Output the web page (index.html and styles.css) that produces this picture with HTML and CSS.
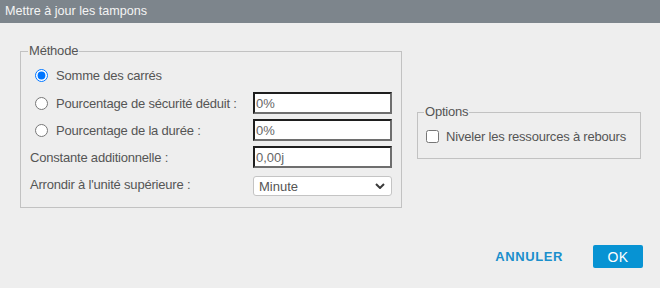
FILE: index.html
```html
<!DOCTYPE html>
<html lang="fr">
<head>
<meta charset="utf-8">
<title>Mettre à jour les tampons</title>
<link rel="stylesheet" href="styles.css">
</head>
<body>
<div class="dialog">
  <header class="titlebar">Mettre à jour les tampons</header>
  <main class="content">
    <fieldset class="group methode">
      <legend>Méthode</legend>
      <div class="grid">
        <label class="radio-row"><input type="radio" name="m" checked><span>Somme des carrés</span></label>
        <span></span>
        <label class="radio-row"><input type="radio" name="m"><span>Pourcentage de sécurité déduit :</span></label>
        <input class="field" type="text" value="0%">
        <label class="radio-row"><input type="radio" name="m"><span>Pourcentage de la durée :</span></label>
        <input class="field" type="text" value="0%">
        <span class="label">Constante additionnelle :</span>
        <input class="field" type="text" value="0,00j">
        <span class="label">Arrondir à l'unité supérieure :</span>
        <div class="select-wrap">
          <select class="select"><option>Minute</option></select>
          <svg class="chevron" width="10" height="6" viewBox="0 0 10 6"><path d="M1 1 L5 5 L9 1" fill="none" stroke="#3a3a3a" stroke-width="2"/></svg>
        </div>
      </div>
    </fieldset>
    <fieldset class="group options">
      <legend>Options</legend>
      <label class="check-row"><input type="checkbox"><span>Niveler les ressources à rebours</span></label>
    </fieldset>
  </main>
  <footer class="actions">
    <button class="btn-text" type="button">ANNULER</button>
    <button class="btn-primary" type="button">OK</button>
  </footer>
</div>
</body>
</html>
```

FILE: styles.css
```css
* { box-sizing: border-box; }
html, body { margin: 0; padding: 0; }
body {
  width: 660px;
  height: 288px;
  background: #eeeeee;
  font-family: "Liberation Sans", Arial, sans-serif;
  font-size: 13px;
  letter-spacing: -0.2px;
  color: #555555;
  overflow: hidden;
}
.dialog {
  display: flex;
  flex-direction: column;
  height: 288px;
}
.titlebar {
  height: 23px;
  line-height: 23px;
  background: #7d858c;
  color: #f4f4f4;
  font-size: 12.6px;
  letter-spacing: 0;
  padding-left: 5px;
}
.content {
  display: flex;
  align-items: flex-start;
  padding: 21px 0 0 20px;
}
.group {
  margin: 0;
  border: 1px solid #c2c2c2;
  min-width: 0;
}
.group legend {
  padding: 0 1px;
  margin-left: -2px;
  line-height: 14px;
  color: #555555;
}
.methode {
  width: 382px;
  padding: 5px 10px 11px 9px;
}
.grid {
  display: grid;
  grid-template-columns: 223px 139px;
  grid-template-rows: 24px 22px 22px 22px 23px;
  row-gap: 5px;
  align-items: center;
}
.radio-row {
  display: flex;
  align-items: center;
  gap: 8px;
  padding-left: 5px;
  white-space: nowrap;
}
.radio-row input {
  width: 13px;
  height: 13px;
  margin: 0;
  accent-color: #0075ff;
}
.label { display: block; white-space: nowrap; }
.field {
  width: 139px;
  height: 22px;
  margin: 0;
  border: 2px solid;
  border-color: #1e1e1e #6e6e6e #6e6e6e #1e1e1e;
  background: #ffffff;
  padding: 0 1px;
  font-family: inherit;
  font-size: 13px;
  color: #666666;
  outline: none;
}
.select-wrap {
  position: relative;
  align-self: end;
  height: 20px;
}
.select {
  appearance: none;
  -webkit-appearance: none;
  width: 139px;
  height: 20px;
  margin: 0;
  border: 1px solid #c4c4c4;
  border-radius: 3px;
  background: #ffffff;
  padding: 0 0 0 5px;
  font-family: inherit;
  font-size: 13px;
  color: #555555;
}
.chevron {
  position: absolute;
  right: 7px;
  top: 7px;
  pointer-events: none;
}
.options {
  width: 224px;
  margin-left: 15px;
  margin-top: 61px;
  padding: 9px 8px 14px 8px;
}
.check-row {
  display: flex;
  align-items: center;
  gap: 7px;
  height: 16px;
  white-space: nowrap;
}
.check-row input {
  width: 13px;
  height: 13px;
  margin: 0;
}
.actions {
  margin-top: auto;
  display: flex;
  justify-content: flex-end;
  align-items: center;
  gap: 30px;
  padding: 0 17px 20px 0;
}
.btn-text {
  border: 0;
  background: none;
  padding: 0;
  font-family: inherit;
  font-size: 13px;
  font-weight: 700;
  letter-spacing: 0.6px;
  color: #1a8fcc;
}
.btn-primary {
  width: 50px;
  height: 23px;
  border: 0;
  border-radius: 2px;
  background: #0793d3;
  color: #ffffff;
  font-family: inherit;
  font-size: 14px;
  letter-spacing: 0.3px;
  padding: 0;
}
```
